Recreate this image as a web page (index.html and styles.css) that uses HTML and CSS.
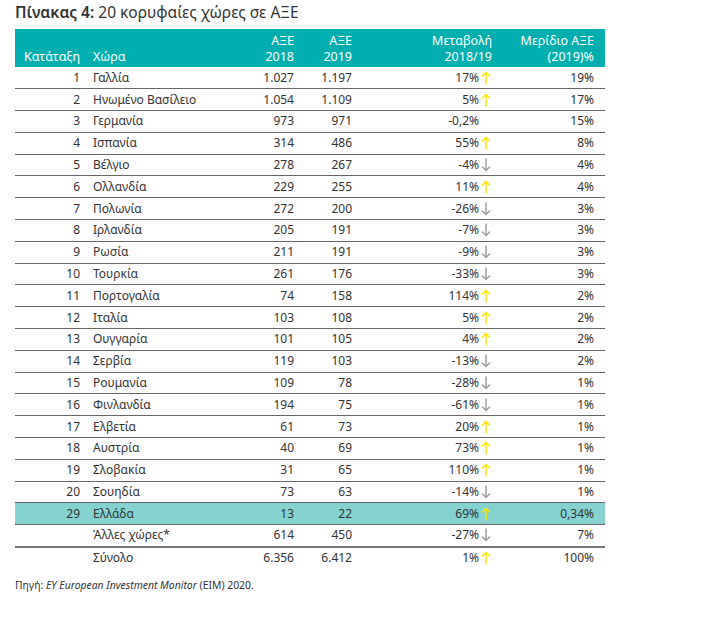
FILE: index.html
```html
<!DOCTYPE html>
<html lang="el">
<head>
<meta charset="utf-8">
<link rel="stylesheet" href="styles.css">
</head>
<body>
<div class="page">
  <h1 class="title"><span class="lbl">Πίνακας 4:</span> 20 κορυφαίες χώρες σε ΑΞΕ</h1>
  <table class="fdi">
    <colgroup>
      <col class="w-rank"><col class="w-name"><col class="w-n1"><col class="w-n2"><col class="w-chg"><col class="w-shr">
    </colgroup>
    <thead>
      <tr>
        <th class="c-rank">Κατάταξη</th>
        <th class="c-name">Χώρα</th>
        <th class="c-n1">ΑΞΕ<br>2018</th>
        <th class="c-n2">ΑΞΕ<br>2019</th>
        <th class="c-chg">Μεταβολή<br>2018/19</th>
        <th class="c-shr">Μερίδιο ΑΞΕ<br>(2019)%</th>
      </tr>
    </thead>
    <tbody>
      <tr><td class="c-rank">1</td><td class="c-name">Γαλλία</td><td class="c-n1">1.027</td><td class="c-n2">1.197</td><td class="c-chg">17%<span class="ar up"><svg viewBox="0 0 10 14"><path d="M5 13.5V1.5M1 5.5L5 1.5L9 5.5"/></svg></span></td><td class="c-shr">19%</td></tr>
      <tr><td class="c-rank">2</td><td class="c-name">Ηνωμένο Βασίλειο</td><td class="c-n1">1.054</td><td class="c-n2">1.109</td><td class="c-chg">5%<span class="ar up"><svg viewBox="0 0 10 14"><path d="M5 13.5V1.5M1 5.5L5 1.5L9 5.5"/></svg></span></td><td class="c-shr">17%</td></tr>
      <tr><td class="c-rank">3</td><td class="c-name">Γερμανία</td><td class="c-n1">973</td><td class="c-n2">971</td><td class="c-chg">-0,2%<span class="ar"></span></td><td class="c-shr">15%</td></tr>
      <tr><td class="c-rank">4</td><td class="c-name">Ισπανία</td><td class="c-n1">314</td><td class="c-n2">486</td><td class="c-chg">55%<span class="ar up"><svg viewBox="0 0 10 14"><path d="M5 13.5V1.5M1 5.5L5 1.5L9 5.5"/></svg></span></td><td class="c-shr">8%</td></tr>
      <tr><td class="c-rank">5</td><td class="c-name">Βέλγιο</td><td class="c-n1">278</td><td class="c-n2">267</td><td class="c-chg">-4%<span class="ar dn"><svg viewBox="0 0 10 14"><path d="M5 0.5V12.5M1 8.5L5 12.5L9 8.5"/></svg></span></td><td class="c-shr">4%</td></tr>
      <tr><td class="c-rank">6</td><td class="c-name">Ολλανδία</td><td class="c-n1">229</td><td class="c-n2">255</td><td class="c-chg">11%<span class="ar up"><svg viewBox="0 0 10 14"><path d="M5 13.5V1.5M1 5.5L5 1.5L9 5.5"/></svg></span></td><td class="c-shr">4%</td></tr>
      <tr><td class="c-rank">7</td><td class="c-name">Πολωνία</td><td class="c-n1">272</td><td class="c-n2">200</td><td class="c-chg">-26%<span class="ar dn"><svg viewBox="0 0 10 14"><path d="M5 0.5V12.5M1 8.5L5 12.5L9 8.5"/></svg></span></td><td class="c-shr">3%</td></tr>
      <tr><td class="c-rank">8</td><td class="c-name">Ιρλανδία</td><td class="c-n1">205</td><td class="c-n2">191</td><td class="c-chg">-7%<span class="ar dn"><svg viewBox="0 0 10 14"><path d="M5 0.5V12.5M1 8.5L5 12.5L9 8.5"/></svg></span></td><td class="c-shr">3%</td></tr>
      <tr><td class="c-rank">9</td><td class="c-name">Ρωσία</td><td class="c-n1">211</td><td class="c-n2">191</td><td class="c-chg">-9%<span class="ar dn"><svg viewBox="0 0 10 14"><path d="M5 0.5V12.5M1 8.5L5 12.5L9 8.5"/></svg></span></td><td class="c-shr">3%</td></tr>
      <tr><td class="c-rank">10</td><td class="c-name">Τουρκία</td><td class="c-n1">261</td><td class="c-n2">176</td><td class="c-chg">-33%<span class="ar dn"><svg viewBox="0 0 10 14"><path d="M5 0.5V12.5M1 8.5L5 12.5L9 8.5"/></svg></span></td><td class="c-shr">3%</td></tr>
      <tr><td class="c-rank">11</td><td class="c-name">Πορτογαλία</td><td class="c-n1">74</td><td class="c-n2">158</td><td class="c-chg">114%<span class="ar up"><svg viewBox="0 0 10 14"><path d="M5 13.5V1.5M1 5.5L5 1.5L9 5.5"/></svg></span></td><td class="c-shr">2%</td></tr>
      <tr><td class="c-rank">12</td><td class="c-name">Ιταλία</td><td class="c-n1">103</td><td class="c-n2">108</td><td class="c-chg">5%<span class="ar up"><svg viewBox="0 0 10 14"><path d="M5 13.5V1.5M1 5.5L5 1.5L9 5.5"/></svg></span></td><td class="c-shr">2%</td></tr>
      <tr><td class="c-rank">13</td><td class="c-name">Ουγγαρία</td><td class="c-n1">101</td><td class="c-n2">105</td><td class="c-chg">4%<span class="ar up"><svg viewBox="0 0 10 14"><path d="M5 13.5V1.5M1 5.5L5 1.5L9 5.5"/></svg></span></td><td class="c-shr">2%</td></tr>
      <tr><td class="c-rank">14</td><td class="c-name">Σερβία</td><td class="c-n1">119</td><td class="c-n2">103</td><td class="c-chg">-13%<span class="ar dn"><svg viewBox="0 0 10 14"><path d="M5 0.5V12.5M1 8.5L5 12.5L9 8.5"/></svg></span></td><td class="c-shr">2%</td></tr>
      <tr><td class="c-rank">15</td><td class="c-name">Ρουμανία</td><td class="c-n1">109</td><td class="c-n2">78</td><td class="c-chg">-28%<span class="ar dn"><svg viewBox="0 0 10 14"><path d="M5 0.5V12.5M1 8.5L5 12.5L9 8.5"/></svg></span></td><td class="c-shr">1%</td></tr>
      <tr><td class="c-rank">16</td><td class="c-name">Φινλανδία</td><td class="c-n1">194</td><td class="c-n2">75</td><td class="c-chg">-61%<span class="ar dn"><svg viewBox="0 0 10 14"><path d="M5 0.5V12.5M1 8.5L5 12.5L9 8.5"/></svg></span></td><td class="c-shr">1%</td></tr>
      <tr><td class="c-rank">17</td><td class="c-name">Ελβετία</td><td class="c-n1">61</td><td class="c-n2">73</td><td class="c-chg">20%<span class="ar up"><svg viewBox="0 0 10 14"><path d="M5 13.5V1.5M1 5.5L5 1.5L9 5.5"/></svg></span></td><td class="c-shr">1%</td></tr>
      <tr><td class="c-rank">18</td><td class="c-name">Αυστρία</td><td class="c-n1">40</td><td class="c-n2">69</td><td class="c-chg">73%<span class="ar up"><svg viewBox="0 0 10 14"><path d="M5 13.5V1.5M1 5.5L5 1.5L9 5.5"/></svg></span></td><td class="c-shr">1%</td></tr>
      <tr><td class="c-rank">19</td><td class="c-name">Σλοβακία</td><td class="c-n1">31</td><td class="c-n2">65</td><td class="c-chg">110%<span class="ar up"><svg viewBox="0 0 10 14"><path d="M5 13.5V1.5M1 5.5L5 1.5L9 5.5"/></svg></span></td><td class="c-shr">1%</td></tr>
      <tr><td class="c-rank">20</td><td class="c-name">Σουηδία</td><td class="c-n1">73</td><td class="c-n2">63</td><td class="c-chg">-14%<span class="ar dn"><svg viewBox="0 0 10 14"><path d="M5 0.5V12.5M1 8.5L5 12.5L9 8.5"/></svg></span></td><td class="c-shr">1%</td></tr>
      <tr class="hl"><td class="c-rank">29</td><td class="c-name">Ελλάδα</td><td class="c-n1">13</td><td class="c-n2">22</td><td class="c-chg">69%<span class="ar up"><svg viewBox="0 0 10 14"><path d="M5 13.5V1.5M1 5.5L5 1.5L9 5.5"/></svg></span></td><td class="c-shr">0,34%</td></tr>
      <tr class="other"><td class="c-rank"></td><td class="c-name">Άλλες χώρες*</td><td class="c-n1">614</td><td class="c-n2">450</td><td class="c-chg">-27%<span class="ar dn"><svg viewBox="0 0 10 14"><path d="M5 0.5V12.5M1 8.5L5 12.5L9 8.5"/></svg></span></td><td class="c-shr">7%</td></tr>
      <tr class="total"><td class="c-rank"></td><td class="c-name">Σύνολο</td><td class="c-n1">6.356</td><td class="c-n2">6.412</td><td class="c-chg">1%<span class="ar up"><svg viewBox="0 0 10 14"><path d="M5 13.5V1.5M1 5.5L5 1.5L9 5.5"/></svg></span></td><td class="c-shr">100%</td></tr>
    </tbody>
  </table>
  <p class="source">Πηγή: <em>EY European Investment Monitor</em> (EIM) 2020.</p>
</div>
</body>
</html>
```

FILE: styles.css
```css
html, body {
  margin: 0;
  padding: 0;
  background: #ffffff;
}
body {
  font-family: "Noto Sans", "Open Sans", sans-serif;
  color: #333333;
}
.page {
  padding: 3px 0 0 15px;
  width: 590px;
}
.title {
  margin: 0 0 8px 0;
  font-size: 15.5px;
  font-weight: 400;
  line-height: 18px;
  color: #333333;
}
.title .lbl {
  font-weight: 600;
}
.fdi {
  width: 590px;
  border-collapse: collapse;
  font-size: 12px;
  table-layout: fixed;
}
.w-rank { width: 70px; }
.w-name { width: 148px; }
.w-n1 { width: 66px; }
.w-n2 { width: 58px; }
.w-chg { width: 140px; }
.w-shr { width: 108px; }
.fdi th,
.fdi td {
  box-sizing: border-box;
}
.fdi th {
  background: #00aeb0;
  color: #ffffff;
  font-weight: 400;
  font-size: 12.5px;
  line-height: 16px;
  height: 38px;
  vertical-align: bottom;
  padding: 0 5px 2px 0;
  text-align: right;
}
.fdi td {
  height: 21.8px;
  padding: 0 5px 0 0;
  line-height: 14px;
  border-bottom: 1px solid #666666;
  text-align: right;
  vertical-align: middle;
}
.fdi th.c-name,
.fdi td.c-name {
  padding-left: 8px;
  text-align: left;
}
.fdi td.c-chg { padding-right: 4px; }
.fdi th.c-shr,
.fdi td.c-shr { padding-right: 11px; }
.ar {
  display: inline-block;
  width: 14px;
  height: 14px;
  vertical-align: -3px;
  text-align: center;
}
.ar svg {
  width: 10px;
  height: 14px;
  fill: none;
  stroke-width: 1.5;
}
.ar.up svg { stroke: #ffe600; }
.ar.dn svg { stroke: #a0a0a0; }
.fdi tr.hl td {
  background: #86d2d0;
}
.fdi tr.other td {
  border-bottom: 2px solid #777777;
}
.fdi tr.total td {
  border-bottom: none;
}
.source {
  margin: 10px 0 0 0;
  font-size: 10.4px;
  color: #333333;
}
```
